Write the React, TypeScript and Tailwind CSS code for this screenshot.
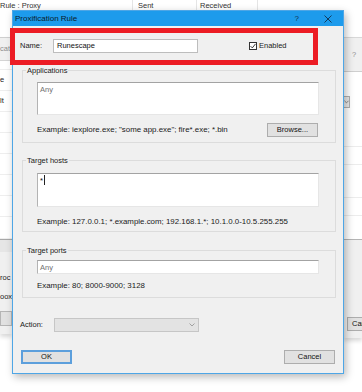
import React from 'react';

const Box: React.FC<{ className?: string; children?: React.ReactNode }> = ({ className = '', children }) => (
  <div
    className={`bg-white border border-t-[#a3a3a3] border-l-[#b3b3b3] border-r-[#e6e6e6] border-b-[#e6e6e6] px-[2px] pt-[2px] leading-[9px] ${className}`}
  >
    {children}
  </div>
);

const GroupBox: React.FC<{ label: string; className?: string; children: React.ReactNode }> = ({
  label,
  className = '',
  children,
}) => (
  <div className={`relative ml-[9px] mr-[7px] border border-[#dcdcdc] pl-[14px] pr-[16px] ${className}`}>
    <span className="absolute left-[3px] top-[-5px] bg-[#f0f0f0] px-px leading-[9px] text-[#1a1a1a]">{label}</span>
    {children}
  </div>
);

const WinButton: React.FC<{ label: string; primary?: boolean; className?: string }> = ({
  label,
  primary,
  className = '',
}) => (
  <div
    className={`flex h-[14px] w-[51px] items-center justify-center bg-[#e1e1e1] leading-none text-[#111] ${
      primary ? 'border-2 border-[#5c9fdc]' : 'border border-[#adadad]'
    } ${className}`}
  >
    {label}
  </div>
);

const Chevron: React.FC<{ color?: string }> = ({ color = '#9a9a9a' }) => (
  <svg width="6" height="4" viewBox="0 0 6 4">
    <path d="M0.5 0.5 L3 3 L5.5 0.5" fill="none" stroke={color} strokeWidth="0.9" />
  </svg>
);

const ListRow: React.FC<{ text?: string; h?: string }> = ({ text, h = 'h-[21px]' }) => (
  <div className={`flex ${h} items-center border-b border-[#eeeeee] leading-none text-[#222]`}>{text}</div>
);

export default function App() {
  return (
    <div className="relative h-[392px] w-[362px] overflow-hidden bg-white font-['Liberation_Sans',sans-serif] text-[7.5px]">
      {/* main window list header behind everything */}
      <div className="flex h-[11px] items-center leading-none text-[#333]">
        <div className="h-full w-[133px] border-r border-[#e5e5e5] pt-[2px]">Rule : Proxy</div>
        <div className="h-full w-[64px] border-r border-[#e5e5e5] pl-[5px] pt-[2px]">Sent</div>
        <div className="h-full w-[61px] border-r border-[#e5e5e5] pl-[3px] pt-[2px]">Received</div>
      </div>

      {/* behind dialog, left edge */}
      <div className="absolute left-0 top-[37px] flex h-[297px] w-[12px] flex-col overflow-hidden border-t border-[#cfcfcf] bg-[#f0f0f0] shadow-[0_3px_4px_rgba(0,0,0,0.15)]">
        <div className="flex h-[22px] items-center whitespace-nowrap leading-none text-[#8c8c8c]">cat</div>
        <div className="flex flex-col border-t border-[#d4d4d4] bg-white">
          <ListRow h="h-[9px]" />
          <ListRow text="e" />
          <ListRow text="lt" />
          <ListRow />
          <ListRow />
          <ListRow />
          <ListRow />
          <ListRow />
          <ListRow h="h-[22px]" />
        </div>
        <div className="h-[13px] border-t border-[#a8a8a8] bg-[#e6e6e6]" />
        <div className="flex flex-col whitespace-nowrap leading-none text-[#222]">
          <div className="mt-[22px]">roc</div>
          <div className="mt-[11px]">oox</div>
          <div className="mt-[11px] h-[15px] border border-[#b5b5b5] bg-[#e1e1e1]" />
        </div>
      </div>

      {/* behind dialog, right edge */}
      <div className="absolute left-[344px] top-[37px] flex h-[301px] w-[18px] flex-col overflow-hidden bg-[#f0f0f0] shadow-[0_3px_4px_rgba(0,0,0,0.15)]">
        <div className="flex h-[34px] items-center border-t border-[#d8d8d8] pl-[8px] leading-none text-[#8f8f8f]">?</div>
        <div className="flex h-[168px] flex-col border-t border-[#cfcfcf] bg-white">
          <div className="mt-[24px] flex h-[12px] w-[6px] items-center justify-center border border-l-0 border-[#b0b0b0] bg-[#e9e9e9]">
            <Chevron color="#666" />
          </div>
          <div className="mt-[38px] h-px bg-[#ececec]" />
          <div className="mt-[17px] h-px bg-[#ececec]" />
          <div className="mt-[32px] h-px bg-[#ececec]" />
          <div className="mt-[17px] h-px bg-[#ececec]" />
        </div>
        <div className="flex flex-1 flex-col border-t border-[#b4b4b4]">
          <div className="ml-[3px] mt-[77px] flex h-[14px] w-[40px] items-center border border-[#adadad] bg-[#e1e1e1] pl-[4px] leading-none text-[#111]">
            Cancel
          </div>
        </div>
      </div>

      {/* Proxification Rule dialog */}
      <div className="absolute left-[12px] top-[10px] flex h-[364px] w-[332px] flex-col border border-[#4ea6e6] bg-[#f0f0f0] shadow-[2px_3px_8px_rgba(0,0,0,0.28)]">
        <div className="flex h-[15px] items-center bg-[#1d9bec] pl-[2px] pr-[11px] leading-none text-[#0b1a29]">
          <span className="text-[8px]">Proxification Rule</span>
          <span className="ml-auto mr-[25px] text-[8px] text-[#11314d]">?</span>
          <svg width="8" height="8" viewBox="0 0 8 8">
            <path d="M0.5 0.5 L7.5 7.5 M7.5 0.5 L0.5 7.5" stroke="#11314d" strokeWidth="0.9" />
          </svg>
        </div>

        {/* name row */}
        <div className="mt-[13px] flex h-[14px] items-center pl-[7px] leading-none text-[#1a1a1a]">
          <span className="w-[33px]">Name:</span>
          <div className="flex h-[14px] w-[145px] items-center border border-[#bdbdbd] bg-white pl-[3px] text-[#111]">
            Runescape
          </div>
          <div className="ml-[51px] flex h-[8px] w-[8px] items-center justify-center border border-[#333] bg-white">
            <svg width="6" height="6" viewBox="0 0 6 6">
              <path d="M0.6 3.2 L2.3 4.9 L5.5 0.9" fill="none" stroke="#222" strokeWidth="0.9" />
            </svg>
          </div>
          <span className="ml-[2px]">Enabled</span>
        </div>

        <GroupBox label="Applications" className="mt-[17px] pb-[5px] pt-[11px]">
          <Box className="h-[33px] text-[#6f6f6f]">Any</Box>
          <div className="mt-[8px] flex h-[14px] items-center justify-between leading-none">
            <span className="text-[7.9px] text-[#1a1a1a]">Example: iexplore.exe; "some app.exe"; fire*.exe; *.bin</span>
            <WinButton label="Browse..." className="mr-[1px] w-[50px]" />
          </div>
        </GroupBox>

        <GroupBox label="Target hosts" className="mt-[17px] pb-[4px] pt-[12px]">
          <Box className="flex h-[34px] items-start text-[#111]">
            <span>*</span>
            <span className="ml-px mt-[-1px] h-[10px] w-px bg-[#222]" />
          </Box>
          <div className="mt-[10px] flex h-[10px] items-center leading-none">
            <span className="text-[7.9px] text-[#1a1a1a]">
              Example: 127.0.0.1; *.example.com; 192.168.1.*; 10.1.0.0-10.5.255.255
            </span>
          </div>
        </GroupBox>

        <GroupBox label="Target ports" className="mt-[18px] pb-[6px] pt-[9px]">
          <Box className="h-[14px] text-[#6f6f6f]">Any</Box>
          <div className="mt-[7px] flex h-[10px] items-center leading-none">
            <span className="text-[7.9px] text-[#1a1a1a]">Example: 80; 8000-9000; 3128</span>
          </div>
        </GroupBox>

        {/* action row */}
        <div className="mt-[20px] flex h-[14px] items-center pl-[7px] leading-none text-[#1a1a1a]">
          <span className="w-[34px]">Action:</span>
          <div className="flex h-[14px] w-[145px] items-center justify-end border border-[#c6c6c6] bg-[#e3e3e3] pr-[3px]">
            <Chevron />
          </div>
        </div>

        {/* buttons */}
        <div className="mt-[18px] flex items-center justify-between pl-[8px] pr-[8px]">
          <WinButton label="OK" primary />
          <WinButton label="Cancel" />
        </div>
      </div>

      {/* red highlight */}
      <div className="absolute left-[10px] top-[28px] h-[37px] w-[308px] border-[5px] border-[#ec1c24]" />
    </div>
  );
}
